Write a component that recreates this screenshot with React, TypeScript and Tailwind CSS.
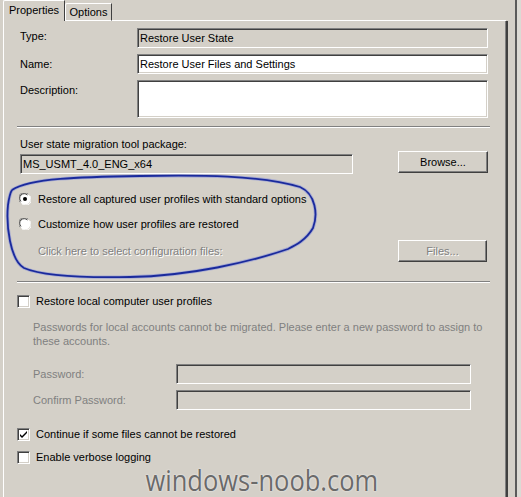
import React from "react"

const sunken =
  "border border-t-[#808080] border-l-[#808080] border-b-white border-r-white shadow-[inset_1px_1px_0_#404040,inset_-1px_-1px_0_#d4d0c8]"
const raised =
  "border border-t-white border-l-white border-b-[#404040] border-r-[#404040] shadow-[inset_-1px_-1px_0_#808080]"

function Radio({ checked }: { checked?: boolean }) {
  return (
    <svg width="12" height="12" viewBox="0 0 12 12" className="shrink-0">
      <circle cx="6" cy="6" r="5.5" fill="#fff" />
      <path d="M1.2 9.2 A5.5 5.5 0 0 1 9.2 1.2" stroke="#808080" strokeWidth="1" fill="none" />
      <path d="M2 8.4 A4.5 4.5 0 0 1 8.4 2" stroke="#404040" strokeWidth="1" fill="none" />
      <path d="M10.6 2.8 A5.5 5.5 0 0 1 2.8 10.6" stroke="#fff" strokeWidth="1" fill="none" />
      {checked && <circle cx="6" cy="6" r="2" fill="#000" />}
    </svg>
  )
}

function Check({ checked }: { checked?: boolean }) {
  return (
    <div className={`w-[13px] h-[13px] bg-white shrink-0 flex items-center justify-center ${sunken}`}>
      {checked && (
        <svg width="9" height="9" viewBox="0 0 9 9">
          <path d="M1 4 L3 6 L8 1 L8 3 L3 8 L1 6 Z" fill="#000" />
        </svg>
      )}
    </div>
  )
}

function Separator() {
  return <div className="ml-[13px] w-[473px] h-[2px] border-t border-t-[#808080] border-b border-b-white" />
}

export default function App() {
  return (
    <div className="relative w-[521px] h-[497px] overflow-hidden bg-[#d4d0c8] font-['Liberation_Sans',Arial,sans-serif] text-[11px] leading-[13px] text-black">
      <div className="flex h-full">
        <div className="flex flex-col w-[508px]">
          {/* tabs */}
          <div className="flex items-end h-[21px] pl-[3px]">
            <div className="relative z-10 h-[21px] w-[62px] bg-[#d4d0c8] border-t border-l border-white border-r border-r-[#404040] rounded-tl-[2px] flex items-center justify-center pb-[2px]">
              Properties
            </div>
            <div className="h-[18px] w-[47px] border-t border-l border-white border-r border-r-[#404040] rounded-tl-[2px] flex items-center justify-center border-b border-b-white">
              Options
            </div>
            <div className="flex-1 h-[1px] bg-white mr-[2px]" />
          </div>

          {/* panel */}
          <div className="flex-1 ml-[3px] border-l border-white border-r-2 border-r-[#404040] shadow-[inset_-1px_0_0_#808080] flex flex-col pt-[7px]">
            <div className="flex flex-col gap-[6px] pl-[16px]">
              <div className="flex h-[20px] items-center">
                <div className="w-[117px] -mt-[3px]">Type:</div>
                <div className={`w-[351px] h-[20px] bg-[#d4d0c8] flex items-center px-[2px] ${sunken}`}>Restore User State</div>
              </div>
              <div className="flex h-[20px] items-center">
                <div className="w-[117px]">Name:</div>
                <div className={`w-[351px] h-[20px] bg-white flex items-center px-[2px] ${sunken}`}>Restore User Files and Settings</div>
              </div>
              <div className="flex h-[38px]">
                <div className="w-[117px] pt-[4px]">Description:</div>
                <div className={`w-[351px] h-[38px] bg-white ${sunken}`} />
              </div>
            </div>

            <div className="mt-[8px]">
              <Separator />
            </div>

            <div className="mt-[10px] pl-[16px] h-[13px]">User state migration tool package:</div>

            <div className="flex pl-[16px] h-[23px]">
              <div className={`mt-[3px] w-[333px] h-[20px] bg-[#d4d0c8] flex items-center px-[2px] ${sunken}`}>MS_USMT_4.0_ENG_x64</div>
              <div className={`ml-[45px] w-[90px] h-[22px] flex items-center justify-center ${raised}`}>Browse...</div>
            </div>

            <div className="mt-[18px] flex items-center h-[14px] pl-[15px] gap-[7px]">
              <Radio checked />
              <span>Restore all captured user profiles with standard options</span>
            </div>
            <div className="mt-[11px] flex items-center h-[14px] pl-[15px] gap-[7px]">
              <Radio />
              <span>Customize how user profiles are restored</span>
            </div>
            <div className="mt-[9px] flex items-center h-[22px] pl-[34px]">
              <span className="w-[360px] text-[#808080] [text-shadow:1px_1px_0_#fff]">Click here to select configuration files:</span>
              <div className={`w-[89px] h-[22px] flex items-center justify-center text-[#808080] [text-shadow:1px_1px_0_#fff] ${raised}`}>Files...</div>
            </div>

            <div className="mt-[19px]">
              <Separator />
            </div>

            <div className="mt-[11px] flex items-center h-[14px] pl-[13px] gap-[6px]">
              <Check />
              <span>Restore local computer user profiles</span>
            </div>

            <p className="mt-[12px] pl-[29px] pr-[20px] leading-[14px] text-[#808080]">
              Passwords for local accounts cannot be migrated. Please enter a new password to assign to these accounts.
            </p>

            <div className="mt-[16px] flex flex-col gap-[6px] pl-[29px]">
              <div className="flex items-center h-[20px]">
                <span className="w-[143px] text-[#808080]">Password:</span>
                <div className={`w-[295px] h-[20px] bg-[#d4d0c8] ${sunken}`} />
              </div>
              <div className="flex items-center h-[20px]">
                <span className="w-[143px] text-[#808080]">Confirm Password:</span>
                <div className={`w-[295px] h-[20px] bg-[#d4d0c8] ${sunken}`} />
              </div>
            </div>

            <div className="mt-[17px] flex items-center h-[14px] pl-[13px] gap-[6px]">
              <Check checked />
              <span>Continue if some files cannot be restored</span>
            </div>
            <div className="mt-[9px] flex items-center h-[14px] pl-[13px] gap-[6px]">
              <Check />
              <span>Enable verbose logging</span>
            </div>
          </div>
        </div>

        <div className="ml-[7px] w-[2px] h-full bg-[#5a5a5a]" />
        <div className="flex-1 bg-[#dcdad4]" />
      </div>

      {/* hand-drawn highlight */}
      <svg className="absolute inset-0 pointer-events-none" width="521" height="497" viewBox="0 0 521 497">
        <path
          d="M12 190 C30 178 80 177 140 176 C200 175 260 175 300 187 C316 194 318 215 313 228 C306 240 296 245 288 249 C250 262 190 276 130 277 C80 278 40 275 24 268 C10 260 6 225 8 205 C9 198 10 193 12 190"
          fill="none"
          stroke="#8c94d8"
          strokeWidth="3.5"
          strokeOpacity="0.6"
        />
        <path
          d="M12 190 C30 178 80 177 140 176 C200 175 260 175 300 187 C316 194 318 215 313 228 C306 240 296 245 288 249 C250 262 190 276 130 277 C80 278 40 275 24 268 C10 260 6 225 8 205 C9 198 10 193 12 190"
          fill="none"
          stroke="#1a2a9c"
          strokeWidth="1.8"
        />
      </svg>

      {/* watermark */}
      <div className="absolute left-0 right-0 bottom-[2px] flex justify-center pl-[2px]">
        <div className="font-['Open_Sans',sans-serif] text-[30px] leading-[30px] text-[#6a6a6a] [text-shadow:0_0_2px_#fff] scale-x-[0.85]">
          windows-noob.com
        </div>
      </div>
    </div>
  )
}
